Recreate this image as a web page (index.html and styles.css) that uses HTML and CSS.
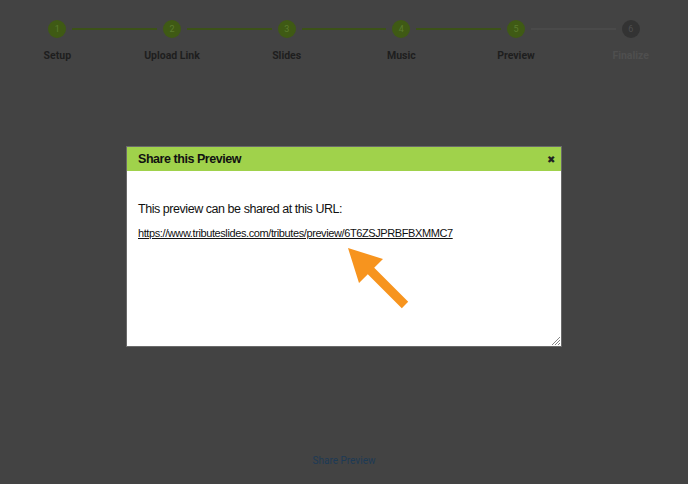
FILE: index.html
```html
<!DOCTYPE html>
<html>
<head>
<meta charset="utf-8">
<link rel="stylesheet" href="styles.css">
</head>
<body>
<div class="page">
  <ol class="steps">
    <li class="step done"><span class="dot">1</span><span class="label">Setup</span></li>
    <li class="step done"><span class="dot">2</span><span class="label">Upload Link</span></li>
    <li class="step done"><span class="dot">3</span><span class="label">Slides</span></li>
    <li class="step done"><span class="dot">4</span><span class="label">Music</span></li>
    <li class="step current"><span class="dot">5</span><span class="label">Preview</span></li>
    <li class="step todo"><span class="dot">6</span><span class="label">Finalize</span></li>
  </ol>
  <div class="spacer"></div>
  <a class="share-link" href="#">Share Preview</a>
</div>

<div class="modal">
  <div class="modal-head">
    <span class="modal-title">Share this Preview</span>
    <span class="close">&#x2716;</span>
  </div>
  <div class="modal-body">
    <p class="intro">This preview can be shared at this URL:</p>
    <a class="url" href="#">https://www.tributeslides.com/tributes/preview/6T6ZSJPRBFBXMMC7</a>
    <svg class="arrow" width="70" height="70" viewBox="0 0 70 70">
      <polygon points="1,1 36,12 27.2,20.8 61.2,54.8 54.8,61.2 20.8,27.2 12,36" fill="#f7941e"/>
    </svg>
    <svg class="grip" width="9" height="9" viewBox="0 0 9 9">
      <path d="M9 1 L1 9 M9 4 L4 9 M9 7 L7 9" stroke="#888" stroke-width="1"/>
    </svg>
  </div>
</div>
</body>
</html>
```

FILE: styles.css
```css
html, body {
  margin: 0;
  padding: 0;
  height: 100%;
}
body {
  background: #434343;
  font-family: Roboto, "Liberation Sans", Arial, sans-serif;
  overflow: hidden;
}
.page {
  height: 484px;
  display: flex;
  flex-direction: column;
}
.steps {
  list-style: none;
  margin: 0;
  padding: 20px 0 0;
  display: grid;
  grid-template-columns: repeat(6, 1fr);
}
.step {
  position: relative;
  display: flex;
  flex-direction: column;
  align-items: center;
}
.step + .step::before {
  content: "";
  position: absolute;
  top: 8px;
  right: calc(50% + 15px);
  width: calc(100% - 30px);
  height: 2px;
  background: #3c5217;
}
.step.todo::before {
  background: #4a4a4a;
}
.dot {
  width: 18px;
  height: 18px;
  border-radius: 50%;
  background: #3f5a14;
  color: #5b7a2e;
  font-size: 9px;
  line-height: 18px;
  text-align: center;
}
.todo .dot {
  background: #333;
  color: #4e4e4e;
}
.label {
  margin-top: 11px;
  font-size: 10.5px;
  font-weight: 700;
  color: #1e1e1e;
}
.todo .label {
  color: #4f4f4f;
}
.spacer {
  flex: 1;
}
.share-link {
  align-self: center;
  margin-bottom: 18px;
  font-size: 10px;
  color: #1d3a55;
  text-decoration: none;
}

.modal {
  position: absolute;
  left: 126px;
  top: 146px;
  width: 434px;
  height: 199px;
  border: 1px solid #6a6a6a;
  background: #fff;
  font-family: "Liberation Sans", Arial, sans-serif;
}
.modal-head {
  height: 24px;
  background: #a0d24b;
  display: flex;
  align-items: center;
  justify-content: space-between;
  padding: 0 6px 0 11px;
}
.modal-title {
  font-size: 12.5px;
  font-weight: 700;
  letter-spacing: -0.45px;
  color: #111;
}
.close {
  font-size: 10px;
  color: #222;
}
.modal-body {
  position: relative;
  padding: 31px 11px 0;
  height: 144px;
}
.intro {
  margin: 0 0 7px;
  font-size: 12.5px;
  letter-spacing: -0.45px;
  color: #111;
}
.url {
  font-size: 11px;
  letter-spacing: -0.4px;
  color: #111;
  text-decoration: underline;
}
.arrow {
  position: absolute;
  left: 220px;
  top: 76px;
}
.grip {
  position: absolute;
  right: 1px;
  bottom: 1px;
}
```
